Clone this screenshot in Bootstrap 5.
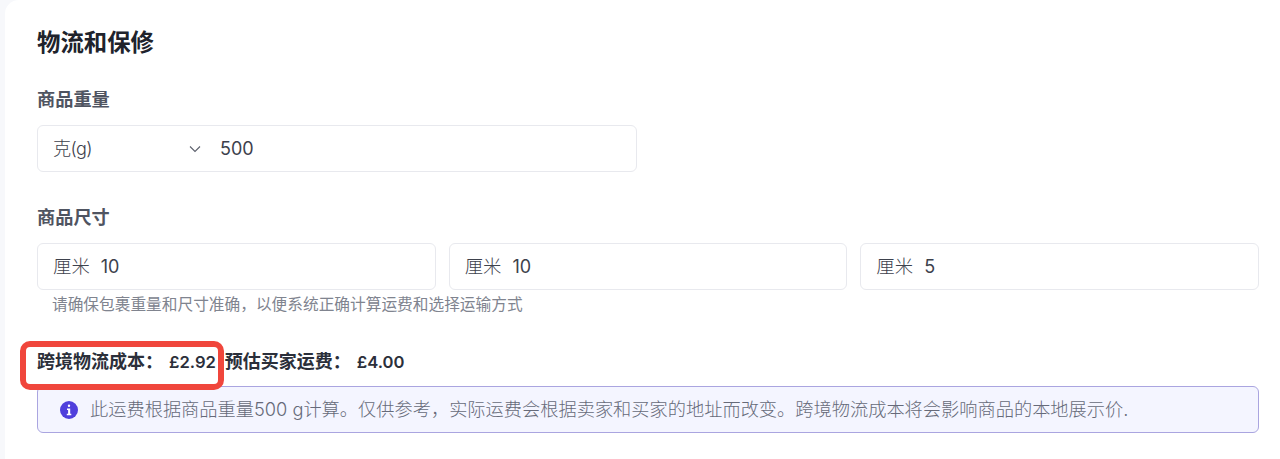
<!doctype html>
<html lang="zh-CN">
<head>
<meta charset="utf-8">
<title>物流和保修</title>
<link href="https://cdn.jsdelivr.net/npm/bootstrap@5.3.0/dist/css/bootstrap.min.css" rel="stylesheet">
<style>
html,body{height:459px;overflow:hidden}
body{background:#f7f8fb;font-family:Inter,"Noto Sans CJK SC",sans-serif;color:#2b2f3a;position:relative}
.sheet{margin-left:5px;height:459px;background:#fff;border-top-left-radius:14px;padding:29px 21px 0 32px}
.sheet-title{font-size:23.4px;line-height:28px;font-weight:700;color:#20232c;margin:0 0 30px}
.field-label{font-size:18.2px;line-height:24px;font-weight:700;color:#4f5461;margin:0 0 14px}
.box-field{height:47px;border:1px solid #e8e9ee;border-radius:6px;background:#fff;padding:0 15px;font-size:18px;color:#3d414c}
.weight-box{width:600px;margin-bottom:33px}
.dim-label{margin-bottom:14px}
.unit-name{width:136px;letter-spacing:-.6px;font-weight:300}
.chev{width:12px;height:8px;margin-right:19px;flex:none}
.dim-row{gap:13px}
.dim-row .box-field{flex:1 1 0}
.unit-gap{margin-right:11px;font-size:18.4px;font-weight:300}
.hint{font-size:15.7px;line-height:20px;color:#80848f;margin:5px 0 0 15px}
.cost-row{font-size:18px;line-height:24px;font-weight:700;color:#2b2f3a;margin:35px 0 12px}
.cost-num{font-size:16.6px;font-weight:600;margin-left:6px;margin-right:9px}
.note{height:47px;background:#f4f5ff;border:1px solid #aaa5e0;border-radius:6px;padding:0 22px;font-size:18.23px;font-weight:300;color:#666a79;gap:12px}
.note svg{flex:none}
.red-frame{position:absolute;left:20px;top:341px;width:204px;height:49px;border:6px solid #f0463c;border-radius:10px}
</style>
</head>
<body>
<div class="sheet">
  <h2 class="sheet-title">物流和保修</h2>
  <div class="field-label">商品重量</div>
  <div class="box-field weight-box d-flex align-items-center">
    <span class="unit-name">克(g)</span>
    <svg class="chev" viewBox="0 0 12 8" fill="none" stroke="#5c606c" stroke-width="1.1"><path d="M1 1.5 6 6.5 11 1.5"/></svg>
    <span>500</span>
  </div>
  <div class="field-label dim-label">商品尺寸</div>
  <div class="d-flex dim-row">
    <div class="box-field d-flex align-items-center"><span class="unit-gap">厘米</span><span>10</span></div>
    <div class="box-field d-flex align-items-center"><span class="unit-gap">厘米</span><span>10</span></div>
    <div class="box-field d-flex align-items-center"><span class="unit-gap">厘米</span><span>5</span></div>
  </div>
  <p class="hint">请确保包裹重量和尺寸准确，以便系统正确计算运费和选择运输方式</p>
  <div class="cost-row d-flex align-items-center"><span>跨境物流成本：</span><span class="cost-num">£2.92</span><span>预估买家运费：</span><span class="cost-num">£4.00</span></div>
  <div class="note d-flex align-items-center">
    <svg width="18" height="18" viewBox="0 0 18 18"><circle cx="9" cy="9" r="9" fill="#4f3fdc"/><path d="M9 3.6a1.2 1.2 0 1 1 0 2.4 1.2 1.2 0 0 1 0-2.4ZM7 7.6h3.2v5.2h1.1v1.4H6.8v-1.4h1.3V9H7Z" fill="#fff"/></svg>
    <span>此运费根据商品重量500 g计算。仅供参考，实际运费会根据卖家和买家的地址而改变。跨境物流成本将会影响商品的本地展示价.</span>
  </div>
</div>
<div class="red-frame"></div>
<script src="https://cdn.jsdelivr.net/npm/bootstrap@5.3.0/dist/js/bootstrap.bundle.min.js"></script>
</body>
</html>
